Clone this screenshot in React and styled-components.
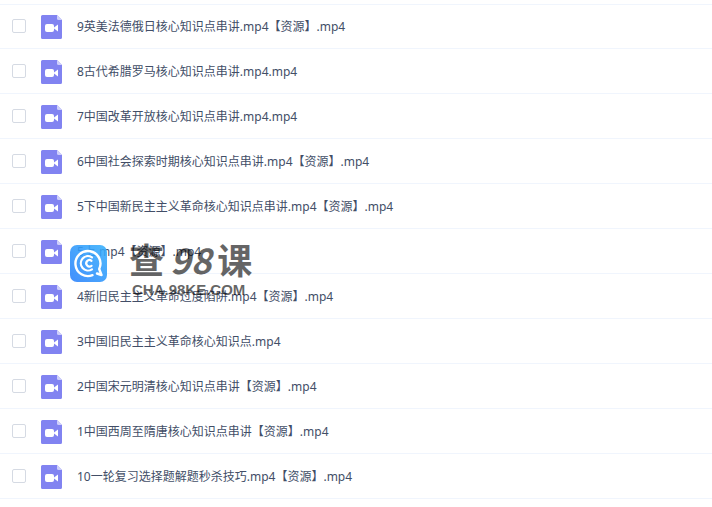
import styled, { createGlobalStyle } from 'styled-components';

const files = [
  '9英美法德俄日核心知识点串讲.mp4【资源】.mp4',
  '8古代希腊罗马核心知识点串讲.mp4.mp4',
  '7中国改革开放核心知识点串讲.mp4.mp4',
  '6中国社会探索时期核心知识点串讲.mp4【资源】.mp4',
  '5下中国新民主主义革命核心知识点串讲.mp4【资源】.mp4',
  '5上.mp4【资源】.mp4',
  '4新旧民主主义革命过度陷阱.mp4【资源】.mp4',
  '3中国旧民主主义革命核心知识点.mp4',
  '2中国宋元明清核心知识点串讲【资源】.mp4',
  '1中国西周至隋唐核心知识点串讲【资源】.mp4',
  '10一轮复习选择题解题秒杀技巧.mp4【资源】.mp4',
];

function VideoIcon() {
  return (
    <svg width="21" height="24" viewBox="0 0 21 24" aria-hidden="true">
      <path d="M1.500 0H16L21 5V22.500a1.500 1.500 0 0 1-1.500 1.500H1.500a1.500 1.500 0 0 1-1.500-1.500V1.500a1.500 1.500 0 0 1 1.500-1.500z" fill="#8183f1" />
      <path d="M16 0L21 5H17.5A1.5 1.5 0 0 1 16 3.5z" fill="#cfd0fb" />
      <rect x="4" y="9" width="9" height="8" rx="2" fill="#fff" />
      <path d="M13 12.500L17 9.500V16.500L13 13.500z" fill="#fff" />
    </svg>
  );
}

function Watermark() {
  return (
    <Mark>
      <svg width="37" height="37" viewBox="0 0 37 37" aria-hidden="true">
        <defs>
          <linearGradient id="badge" x1="0" y1="1" x2="1" y2="0">
            <stop offset="0" stopColor="#2a80fc" />
            <stop offset="1" stopColor="#35b0fc" />
          </linearGradient>
        </defs>
        <rect width="37" height="37" rx="7" fill="url(#badge)" opacity="0.88" />
        <g fill="none" stroke="#fff" strokeLinecap="round">
          <path d="M22.500 30.200A12.500 12.500 0 1 1 29.200 24L31.500 30L27 28.500" strokeWidth="2.400" strokeLinejoin="round" />
          <path d="M22 12.300A7.200 7.200 0 1 0 22 24.300" strokeWidth="2.200" />
          <path d="M21.500 15.800A3.200 3.200 0 1 0 21.500 20.800" strokeWidth="2.200" />
        </g>
      </svg>
      <MarkText>
        <MarkTitle>
          <span>查</span>
          <MarkNumber>98</MarkNumber>
          <span>课</span>
        </MarkTitle>
        <MarkSite>CHA.98KE.COM</MarkSite>
      </MarkText>
    </Mark>
  );
}

function App() {
  return (
    <Page>
      <GlobalStyle />
      <TopLine />
      <FileList>
        {files.map((name, index) => (
          <FileRow key={name}>
            <Checkbox type="checkbox" id={`file-${index}`} />
            <FileLabel htmlFor={`file-${index}`}>
              <VideoIcon />
              <span>{name}</span>
            </FileLabel>
          </FileRow>
        ))}
      </FileList>
      <Watermark />
    </Page>
  );
}

const GlobalStyle = createGlobalStyle`
  body {
    margin: 0;
    background: #fff;
  }
`;

const Page = styled.main`
  position: relative;
  overflow: hidden;
  font-family: 'Noto Sans', 'Noto Sans CJK SC', sans-serif;
  color: #424e67;
`;

const TopLine = styled.div`
  height: 4px;
  border-bottom: 1px solid #f0f5fd;
`;

const FileList = styled.ul`
  list-style: none;
  margin: -1px 0 0;
  padding: 0;
`;

const FileRow = styled.li`
  display: flex;
  align-items: center;
  gap: 15px;
  height: 44px;
  padding-left: 12px;
  border-bottom: 1px solid #f0f5fd;
`;

const Checkbox = styled.input`
  appearance: none;
  flex: none;
  width: 14px;
  height: 14px;
  margin: 0;
  border: 1px solid #d5dae3;
  border-radius: 2px;
  background: #fff;

  &:checked {
    background: #8183f1;
  }
`;

const FileLabel = styled.label`
  display: flex;
  align-items: center;
  gap: 15px;
  padding-top: 1px;
  font-size: 12px;
  line-height: 18px;
  white-space: nowrap;

  svg {
    flex: none;
  }
`;

const Mark = styled.div`
  position: absolute;
  top: 238px;
  left: 70px;
  display: flex;
  gap: 22px;
  pointer-events: none;

  > svg {
    margin-top: 7px;
  }
`;

const MarkText = styled.div`
  color: #000;
  opacity: 0.6;
  font-weight: 700;
`;

const MarkTitle = styled.div`
  display: flex;
  align-items: center;
  gap: 6px;
  height: 42px;
  font-family: 'Noto Sans CJK SC', sans-serif;
  font-size: 35px;
  line-height: 42px;
`;

const MarkNumber = styled.span`
  font-style: italic;
`;

const MarkSite = styled.div`
  padding-left: 3px;
  font-family: 'Liberation Sans', sans-serif;
  font-size: 15px;
  line-height: 20px;
`;

export default App;
